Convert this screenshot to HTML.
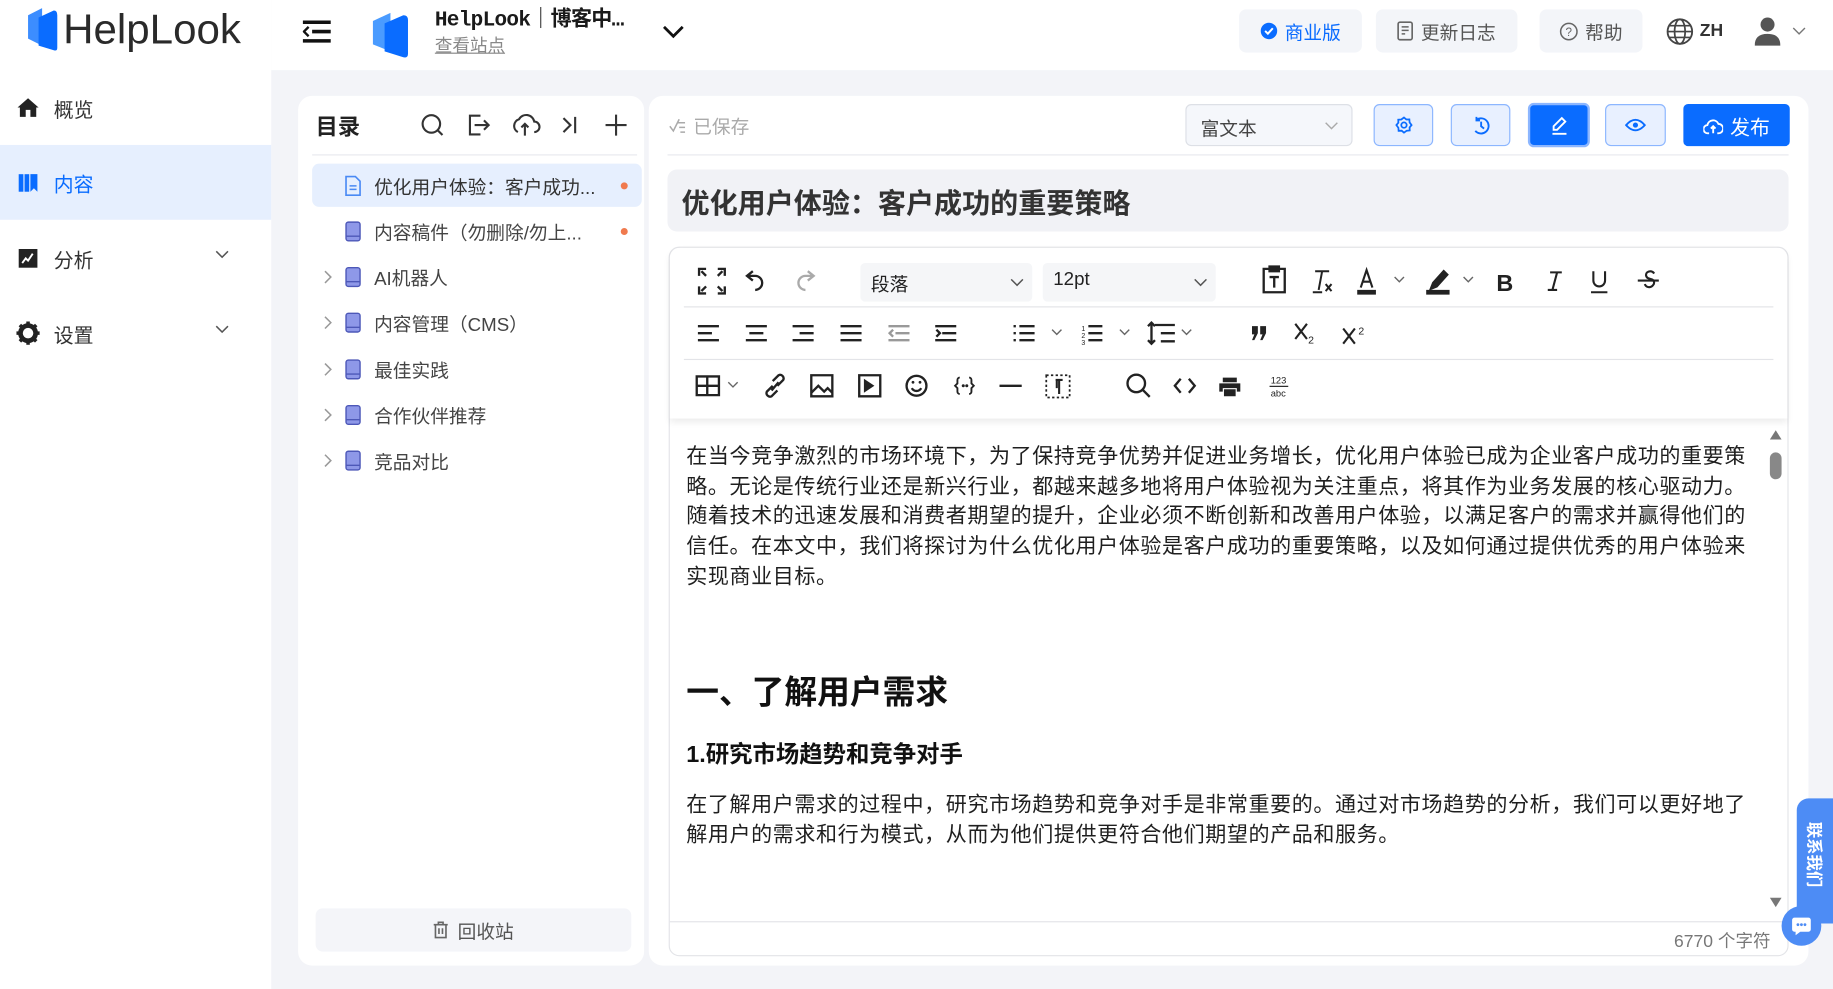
<!DOCTYPE html>
<html><head><meta charset="utf-8">
<style>
*{box-sizing:border-box;margin:0;padding:0}
html,body{width:1833px;height:989px;overflow:hidden;background:#f3f4f8}
body{font-family:"Liberation Sans","Noto Sans CJK SC",sans-serif;color:#222}
#w{position:absolute;left:0;top:0;width:1568px;height:846px;transform:scale(1.16901);transform-origin:0 0;background:#f3f4f8}
.a{position:absolute}
svg{display:block}
.side{left:0;top:0;width:232px;height:846px;background:#fff}
.nav{left:0;width:232px;height:64px;display:flex;align-items:center;padding-left:14px;font-size:17px;color:#333}
.nav .ic{width:20px;margin-right:12px}
.nav .ch{position:absolute;left:184px;top:25px}
.hdr{left:232px;top:0;width:1336px;height:60px;background:#fff}
.hb{top:8px;height:37px;background:#f3f5f9;border-radius:6px;display:flex;align-items:center;justify-content:center;font-size:16px;color:#555;gap:6px}
.card{background:#fff;border-radius:12px}
.ti{left:267px;width:282px;height:37px;display:flex;align-items:center;font-size:16px;color:#444}
.ti .ar{position:absolute;left:9px;top:13px}
.ti .bk{position:absolute;left:28px;top:10px}
.ti span{position:absolute;left:53px}
.dot{position:absolute;left:264px;top:16px;width:6px;height:6px;border-radius:50%;background:#f07a4e}
.tb{top:89px;height:36px;border:1px solid #8cb6ff;background:#e8f0ff;border-radius:5px;display:flex;align-items:center;justify-content:center}
.t div{font-size:18px;line-height:25.7px;height:25.7px;color:#1f1f1f;letter-spacing:0.5px;white-space:nowrap}
</style></head><body><div id="w">

<!-- sidebar -->
<div class="a side">
 <div class="a" style="left:20px;top:4px;display:flex;align-items:center">
  <svg width="30" height="40" viewBox="0 0 30 40"><path d="M4 8 L16 2 L16 34 L4 28Z" fill="#3c8dff"/><path d="M13 10 L26 4 Q29 4 29 8 L29 36 Q29 39 26 38 L13 34Z" fill="#0a6cff"/></svg>
  <span style="font-size:36px;color:#2a2a2a;margin-left:4px;letter-spacing:0px">HelpLook</span>
 </div>
 <div class="a nav" style="top:60px"><svg class="ic" width="20" height="18" viewBox="0 0 20 18"><path d="M10 1 L19 9 L17 9 L17 17 L12 17 L12 11 L8 11 L8 17 L3 17 L3 9 L1 9Z" fill="#222"/></svg>概览</div>
 <div class="a nav" style="top:124px;background:#e6effe;color:#0a6cff"><svg class="ic" width="20" height="18" viewBox="0 0 20 18"><rect x="2" y="2" width="4" height="15" fill="#0a6cff"/><rect x="7" y="2" width="4" height="15" fill="#0a6cff"/><path d="M12 2h6v15l-3-3-3 3z" fill="#0a6cff"/></svg>内容</div>
 <div class="a nav" style="top:189px"><svg class="ic" width="20" height="18" viewBox="0 0 20 18"><rect x="2" y="1" width="16" height="16" fill="#222"/><path d="M5 13 L8 9 L10 11 L14 5" stroke="#fff" stroke-width="1.6" fill="none"/></svg>分析<svg class="ch" width="12" height="8" viewBox="0 0 12 8"><path d="M1 1l5 5 5-5" stroke="#555" stroke-width="1.3" fill="none"/></svg></div>
 <div class="a nav" style="top:253px"><svg class="ic" width="20" height="20" viewBox="0 0 20 20"><circle cx="10" cy="10" r="6.5" fill="none" stroke="#222" stroke-width="4"/><path d="M10 0v4M10 16v4M0 10h4M16 10h4M3 3l3 3M14 14l3 3M3 17l3-3M14 6l3-3" stroke="#222" stroke-width="3"/></svg>设置<svg class="ch" width="12" height="8" viewBox="0 0 12 8"><path d="M1 1l5 5 5-5" stroke="#555" stroke-width="1.3" fill="none"/></svg></div>
</div>

<!-- header -->
<div class="a hdr"></div>
<svg class="a" style="left:259px;top:17px" width="24" height="20" viewBox="0 0 24 20"><path d="M0 2h24M8 10h16M0 18h24" stroke="#111" stroke-width="3"/><path d="M5 6 L1 10 L5 14" stroke="#111" stroke-width="2" fill="none"/></svg>
<svg class="a" style="left:316px;top:8px" width="34" height="42" viewBox="0 0 34 42"><path d="M3 10 L18 3 L18 36 L3 30Z" fill="#4a9bff"/><path d="M13 12 L29 5 Q33 5 33 9 L33 38 Q33 42 29 41 L13 36Z" fill="#0a6cff"/></svg>
<div class="a" style="left:372px;top:2px;font-size:18px;font-weight:bold;color:#1a1a1a;font-family:'Liberation Mono','Noto Sans CJK SC',monospace;letter-spacing:-0.6px">HelpLook｜博客中…</div>
<div class="a" style="left:372px;top:28px;font-size:15px;color:#888;text-decoration:underline">查看站点</div>
<svg class="a" style="left:566px;top:21px" width="20" height="13" viewBox="0 0 20 13"><path d="M2 2l8 8 8-8" stroke="#111" stroke-width="2.4" fill="none"/></svg>
<div class="a hb" style="left:1060px;width:105px;color:#0a6cff"><svg width="15" height="15" viewBox="0 0 16 16"><circle cx="8" cy="8" r="7.5" fill="#0a6cff"/><path d="M4.5 8l2.5 2.5 4.5-5" stroke="#fff" stroke-width="1.8" fill="none"/></svg>商业版</div>
<div class="a hb" style="left:1177px;width:121px"><svg width="14" height="17" viewBox="0 0 14 17"><rect x="1" y="1" width="12" height="15" rx="1.5" fill="none" stroke="#666" stroke-width="1.4"/><path d="M4 5h6M4 8h6M4 11h3" stroke="#666" stroke-width="1.3"/></svg>更新日志</div>
<div class="a hb" style="left:1317px;width:88px"><svg width="16" height="16" viewBox="0 0 16 16"><circle cx="8" cy="8" r="7" fill="none" stroke="#666" stroke-width="1.3"/><text x="8" y="12" font-size="10" text-anchor="middle" fill="#666" font-family="Liberation Sans">?</text></svg>帮助</div>
<svg class="a" style="left:1425px;top:15px" width="24" height="24" viewBox="0 0 24 24"><circle cx="12" cy="12" r="10.5" fill="none" stroke="#444" stroke-width="1.6"/><ellipse cx="12" cy="12" rx="4.5" ry="10.5" fill="none" stroke="#444" stroke-width="1.5"/><path d="M1.5 12h21M3 7h18M3 17h18" stroke="#444" stroke-width="1.4"/></svg>
<div class="a" style="left:1454px;top:18px;font-size:15px;font-weight:bold;color:#333">ZH</div>
<svg class="a" style="left:1501px;top:14px" width="22" height="26" viewBox="0 0 22 26"><circle cx="11" cy="7" r="6" fill="#555"/><path d="M0 25 Q0 15 11 15 Q22 15 22 25Z" fill="#555"/></svg>
<svg class="a" style="left:1533px;top:23px" width="12" height="8" viewBox="0 0 12 8"><path d="M1 1l5 5 5-5" stroke="#777" stroke-width="1.2" fill="none"/></svg>

<!-- tree panel -->
<div class="a card" style="left:255px;top:82px;width:296px;height:744px"></div>
<div class="a" style="left:270px;top:94px;font-size:19px;font-weight:bold;color:#222">目录</div>
<svg class="a" style="left:358px;top:96px" width="180" height="22" viewBox="0 0 180 22">
 <g stroke="#333" stroke-width="1.8" fill="none">
 <circle cx="11" cy="10" r="7.5"/><path d="M16.5 15.5l4 4"/>
 <path d="M53 3h-9v16h9M48 11h12M56 7l4 4-4 4"/>
 <path d="M85 17a6 6 0 0 1 1-11a7 7 0 0 1 13 2a4.5 4.5 0 0 1 0 9M91 20v-10M88 13l3-3 3 3"/>
 <path d="M124 5l6 6-6 6M134 4v14"/>
 <path d="M169 2v18M160 11h18"/></g></svg>
<div class="a" style="left:267px;top:132px;width:278px;height:1px;background:#e8e9ee"></div>
<div class="a ti" style="top:140px;background:#e6effe;border-radius:6px;color:#333"><svg class="bk" width="14" height="18" viewBox="0 0 14 18"><path d="M1 1h8l4 4v12H1z" fill="none" stroke="#4a8af4" stroke-width="1.4"/><path d="M4 9h6M4 12h6" stroke="#4a8af4" stroke-width="1.3"/></svg><span>优化用户体验：客户成功...</span><i class="dot"></i></div>
<div class="a ti" style="top:179px"><svg class="bk" width="14" height="18" viewBox="0 0 14 18"><rect x="1" y="1" width="12" height="16" rx="2" fill="#8e98e8" stroke="#4d58b8" stroke-width="1.2"/><path d="M1 13h12" stroke="#4d58b8" stroke-width="1.2"/></svg><span>内容稿件（勿删除/勿上...</span><i class="dot"></i></div>
<div class="a ti" style="top:218px"><svg class="ar" width="8" height="12" viewBox="0 0 8 12"><path d="M2 1l5 5-5 5" stroke="#999" stroke-width="1.3" fill="none"/></svg><svg class="bk" width="14" height="18" viewBox="0 0 14 18"><rect x="1" y="1" width="12" height="16" rx="2" fill="#8e98e8" stroke="#4d58b8" stroke-width="1.2"/><path d="M1 13h12" stroke="#4d58b8" stroke-width="1.2"/></svg><span>AI机器人</span></div>
<div class="a ti" style="top:257px"><svg class="ar" width="8" height="12" viewBox="0 0 8 12"><path d="M2 1l5 5-5 5" stroke="#999" stroke-width="1.3" fill="none"/></svg><svg class="bk" width="14" height="18" viewBox="0 0 14 18"><rect x="1" y="1" width="12" height="16" rx="2" fill="#8e98e8" stroke="#4d58b8" stroke-width="1.2"/><path d="M1 13h12" stroke="#4d58b8" stroke-width="1.2"/></svg><span>内容管理（CMS）</span></div>
<div class="a ti" style="top:297px"><svg class="ar" width="8" height="12" viewBox="0 0 8 12"><path d="M2 1l5 5-5 5" stroke="#999" stroke-width="1.3" fill="none"/></svg><svg class="bk" width="14" height="18" viewBox="0 0 14 18"><rect x="1" y="1" width="12" height="16" rx="2" fill="#8e98e8" stroke="#4d58b8" stroke-width="1.2"/><path d="M1 13h12" stroke="#4d58b8" stroke-width="1.2"/></svg><span>最佳实践</span></div>
<div class="a ti" style="top:336px"><svg class="ar" width="8" height="12" viewBox="0 0 8 12"><path d="M2 1l5 5-5 5" stroke="#999" stroke-width="1.3" fill="none"/></svg><svg class="bk" width="14" height="18" viewBox="0 0 14 18"><rect x="1" y="1" width="12" height="16" rx="2" fill="#8e98e8" stroke="#4d58b8" stroke-width="1.2"/><path d="M1 13h12" stroke="#4d58b8" stroke-width="1.2"/></svg><span>合作伙伴推荐</span></div>
<div class="a ti" style="top:375px"><svg class="ar" width="8" height="12" viewBox="0 0 8 12"><path d="M2 1l5 5-5 5" stroke="#999" stroke-width="1.3" fill="none"/></svg><svg class="bk" width="14" height="18" viewBox="0 0 14 18"><rect x="1" y="1" width="12" height="16" rx="2" fill="#8e98e8" stroke="#4d58b8" stroke-width="1.2"/><path d="M1 13h12" stroke="#4d58b8" stroke-width="1.2"/></svg><span>竞品对比</span></div>
<div class="a" style="left:270px;top:777px;width:270px;height:37px;background:#f4f5f9;border-radius:6px;display:flex;align-items:center;justify-content:center;gap:7px;font-size:16px;color:#555"><svg width="14" height="15" viewBox="0 0 14 15"><path d="M1 3h12M5 3V1h4v2M2.5 3v11h9V3M5.5 6v5M8.5 6v5" stroke="#666" stroke-width="1.4" fill="none"/></svg>回收站</div>

<!-- editor panel -->
<div class="a card" style="left:555px;top:82px;width:992px;height:744px;border-radius:12px"></div>
<div class="a" style="left:572px;top:95px;font-size:16px;color:#aaa;display:flex;align-items:center;gap:6px"><svg width="15" height="14" viewBox="0 0 15 14"><path d="M1 8l3 4 5-10M8 5h6M9 9h5M10 13h4" stroke="#aaa" stroke-width="1.3" fill="none"/></svg>已保存</div>
<div class="a" style="left:1014px;top:89px;width:143px;height:36px;border:1px solid #dde0e6;background:#f5f7fb;border-radius:5px;font-size:16px;color:#444;padding:7px 0 0 12px">富文本<svg style="position:absolute;left:118px;top:14px" width="12" height="8" viewBox="0 0 12 8"><path d="M1 1l5 5 5-5" stroke="#aaa" stroke-width="1.2" fill="none"/></svg></div>
<div class="a tb" style="left:1175px;width:51px"><svg width="16" height="16" viewBox="0 0 16 16"><circle cx="8" cy="8" r="2.3" fill="none" stroke="#0a6cff" stroke-width="1.5"/><path d="M8 1.5l2 1.7 2.6-.1.2 2.6L14.5 8l-1.7 2 .1 2.6-2.6.2L8 14.5l-2-1.7-2.6.1-.2-2.6L1.5 8l1.7-2-.1-2.6 2.6-.2z" fill="none" stroke="#0a6cff" stroke-width="1.5"/></svg></div>
<div class="a tb" style="left:1241px;width:51px"><svg width="16" height="17" viewBox="0 0 16 17"><path d="M4 3.5A6.5 6.5 0 1 1 3 13M4 1v3h3M8 5v4l2.5 2" stroke="#0a6cff" stroke-width="1.6" fill="none"/></svg></div>
<div class="a tb" style="left:1307px;top:88px;width:53px;height:38px;background:#0a6cff;border:2px solid #8cb6ff"><svg width="16" height="17" viewBox="0 0 16 17"><path d="M10 2l3 3-7 7H3V9z M2 15.5h12" stroke="#fff" stroke-width="1.6" fill="none"/></svg></div>
<div class="a tb" style="left:1373px;width:52px"><svg width="18" height="12" viewBox="0 0 18 12"><path d="M1 6Q9-3 17 6Q9 15 1 6Z" fill="none" stroke="#0a6cff" stroke-width="1.6"/><circle cx="9" cy="6" r="2.2" fill="#0a6cff"/></svg></div>
<div class="a" style="left:1440px;top:89px;width:91px;height:36px;background:#0a6cff;border-radius:4px;display:flex;align-items:center;justify-content:center;gap:6px;color:#fff;font-size:17px"><svg width="17" height="15" viewBox="0 0 17 15"><path d="M5 14H4a3.5 3.5 0 0 1-.5-7A5 5 0 0 1 13 6a3.5 3.5 0 0 1 0 8h-1M8.5 14V8M6.5 10l2-2 2 2" stroke="#fff" stroke-width="1.6" fill="none"/></svg>发布</div>
<div class="a" style="left:571px;top:132px;width:959px;height:1px;background:#e8e9ee"></div>
<div class="a" style="left:571px;top:145px;width:959px;height:53px;background:#f1f2f6;border-radius:8px;font-size:24px;font-weight:bold;color:#333;padding:9px 0 0 12px">优化用户体验：客户成功的重要策略</div>

<!-- editor box -->
<div class="a" style="left:572px;top:211px;width:958px;height:607px;border:1px solid #e3e4e8;border-radius:9px;background:#fff"></div>
<div class="a" style="left:573px;top:212px;width:956px;height:146px;border-radius:9px 9px 0 0;box-shadow:0 3px 6px rgba(0,0,0,0.07);background:#fff"></div>
<div class="a" style="left:585px;top:262px;width:932px;height:1px;background:#e3e4e8"></div>
<div class="a" style="left:585px;top:307px;width:932px;height:1px;background:#e3e4e8"></div>
<div class="a" style="left:736px;top:225px;width:147px;height:33px;background:#f5f6f8;border-radius:4px;font-size:16px;color:#222;padding:5px 0 0 9px">段落<svg style="position:absolute;left:128px;top:13px" width="12" height="8" viewBox="0 0 12 8"><path d="M1 1l5 5 5-5" stroke="#555" stroke-width="1.3" fill="none"/></svg></div>
<div class="a" style="left:892px;top:225px;width:148px;height:33px;background:#f5f6f8;border-radius:4px;font-size:16px;color:#222;padding:6px 0 0 9px">12pt<svg style="position:absolute;left:129px;top:13px" width="12" height="8" viewBox="0 0 12 8"><path d="M1 1l5 5 5-5" stroke="#555" stroke-width="1.3" fill="none"/></svg></div>

<svg class="a" style="left:585px;top:220px" width="940" height="130" viewBox="585 220 940 130">
<g stroke="#222" stroke-width="2" fill="none">
 <path d="M598 236v-6h6M614 230h6v6M598 245v6h6M620 245v6h-6M600 232l4 4M618 232l-4 4M600 249l4-4M618 249l-4-4"/>
 <path d="M644 232l-5 4 5 4M639 236h7a6 6 0 0 1 0 12"/>
 <path d="M691 232l5 4-5 4M696 236h-7a6 6 0 0 0 0 12" stroke="#aaa"/>
 <path d="M1081 230h18v20h-18zM1086 228h8v4h-8zM1086 237h8M1090 237v9"/>
 <path d="M1125 232h12M1131 232l-3 16M1123 250h8M1134 243l5 6M1139 243l-5 6" stroke-width="1.7"/>
 <path d="M1164 246l5-15 5 15M1166 241h6" stroke-width="1.8"/>
 <path d="M1193 237l4 4 4-4M1252 237l4 4 4-4" stroke-width="1.2" stroke="#666"/>
 <path d="M1235 232l-9 10-2 5 5-2 9-10z" fill="#222"/>
 <path d="M1332 233l-4 15M1326 233h10M1324 248h8" stroke-width="1.8"/>
 <path d="M1363 232v8a5 5 0 0 0 10 0v-8M1361 250h14" stroke-width="1.8"/>
 <path d="M1415 234a4 4 0 0 0-6-1 3 3 0 0 0 1 5l3 1a3 3 0 0 1 1 5 4 4 0 0 1-7-1M1401 240h18" stroke-width="1.8"/>
 <path d="M597 279h18M597 285h12M597 291h18M638 279h18M641 285h12M638 291h18M678 279h18M684 285h12M678 291h18M719 279h18M719 285h18M719 291h18"/>
 <path d="M760 279h18M766 285h12M760 291h18M764 282l-3 3 3 3" stroke="#999"/>
 <path d="M800 279h18M806 285h12M800 291h18M801 282l3 3-3 3"/>
 <path d="M872 279h13M872 285h13M872 291h13M867 279h2M867 285h2M867 291h2"/>
 <path d="M931 279h12M931 285h12M931 291h12"/>
 <path d="M988 278h17M993 285h12M993 292h12M985 276v18M982 279l3-3 3 3M982 291l3 3 3-3"/>
 <path d="M900 282l4 4 4-4M958 282l4 4 4-4M1011 282l4 4 4-4" stroke-width="1.2" stroke="#666"/>
 <path d="M1108 277l10 13M1118 277l-10 13M1149 281l10 13M1159 281l-10 13" stroke-width="1.8"/>
 <path d="M596 322h19v16h-19zM596 330h19M605 322v16"/>
 <path d="M623 327l4 4 4-4" stroke-width="1.2" stroke="#666"/>
 <path d="M661 330l-5 5a3 3 0 0 0 4 4l5-5M665 330l5-5a3 3 0 0 0-4-4l-5 5M660 334l6-7"/>
 <path d="M694 321h18v18h-18zM694 336l6-6 5 5 3-3 4 4"/>
 <path d="M735 321h18v18h-18z"/>
 <circle cx="784" cy="330" r="8.5"/>
 <path d="M780 332a4.5 4.5 0 0 0 8 0"/>
 <path d="M821 323a2 2 0 0 0-2 2v3l-2 2 2 2v3a2 2 0 0 0 2 2M829 323a2 2 0 0 1 2 2v3l2 2-2 2v3a2 2 0 0 1-2 2" stroke-width="1.6"/>
 <path d="M855 330h19"/>
 <path d="M895 321h20v19h-20z" stroke-dasharray="2 2" stroke-width="1.5"/>
 <path d="M903 325h6M906 325v12M904 325v7" stroke-width="1.8"/>
 <circle cx="972" cy="328" r="7.5"/><path d="M977.5 333.5l6 6"/>
 <path d="M1010 324l-5 6 5 6M1017 324l5 6-5 6"/>
</g>
<g fill="#222">
 <path d="M1161 248h16v4h-16zM1220 248h20v4h-20z"/>
 <text x="1280" y="249" font-size="20" font-weight="bold" font-family="Liberation Sans">B</text>
 <path d="M739 324l9 6-9 6z"/>
 <circle cx="781" cy="327" r="1.2"/><circle cx="787" cy="327" r="1.2"/>
 <circle cx="824" cy="330" r="1.3"/><circle cx="827" cy="330" r="1.3"/>
 <path d="M1071 279h5v6l-3 6h-2l2-5h-2zM1078 279h5v6l-3 6h-2l2-5h-2z"/>
 <text x="1119" y="294" font-size="9" font-family="Liberation Sans">2</text>
 <text x="1162" y="286" font-size="9" font-family="Liberation Sans">2</text>
 <path d="M1046 323h12v4h-12zM1043 328h18v7h-3v-3h-12v3h-3zM1047 333h10v6h-10z"/>
 <text x="1087" y="328" font-size="8" font-family="Liberation Sans">123</text>
 <rect x="1086" y="330" width="16" height="1"/>
 <text x="1087" y="339" font-size="8" font-family="Liberation Sans">abc</text>
 <text x="925" y="283" font-size="6" font-family="Liberation Sans">1</text>
 <text x="925" y="289" font-size="6" font-family="Liberation Sans">2</text>
 <text x="925" y="295" font-size="6" font-family="Liberation Sans">3</text>
</g>
</svg>

<!-- content -->
<div class="a t" style="left:587px;top:378px">
<div>在当今竞争激烈的市场环境下，为了保持竞争优势并促进业务增长，优化用户体验已成为企业客户成功的重要策</div>
<div>略。无论是传统行业还是新兴行业，都越来越多地将用户体验视为关注重点，将其作为业务发展的核心驱动力。</div>
<div>随着技术的迅速发展和消费者期望的提升，企业必须不断创新和改善用户体验，以满足客户的需求并赢得他们的</div>
<div>信任。在本文中，我们将探讨为什么优化用户体验是客户成功的重要策略，以及如何通过提供优秀的用户体验来</div>
<div>实现商业目标。</div>
</div>
<div class="a" style="left:587px;top:571px;font-size:28px;font-weight:bold;color:#111">一、了解用户需求</div>
<div class="a" style="left:587px;top:629px;font-size:20px;font-weight:bold;color:#111">1.研究市场趋势和竞争对手</div>
<div class="a t" style="left:587px;top:676px">
<div>在了解用户需求的过程中，研究市场趋势和竞争对手是非常重要的。通过对市场趋势的分析，我们可以更好地了</div>
<div>解用户的需求和行为模式，从而为他们提供更符合他们期望的产品和服务。</div>
</div>

<!-- scrollbar -->
<svg class="a" style="left:1513px;top:367px" width="12" height="10" viewBox="0 0 12 10"><path d="M1 9L6 1l5 8z" fill="#777"/></svg>
<div class="a" style="left:1514px;top:387px;width:10px;height:23px;background:#888;border-radius:5px"></div>
<svg class="a" style="left:1513px;top:767px" width="12" height="10" viewBox="0 0 12 10"><path d="M1 1h10L6 9z" fill="#777"/></svg>
<div class="a" style="left:573px;top:788px;width:956px;height:1px;background:#e3e4e8"></div>
<div class="a" style="left:1432px;top:794px;font-size:15px;color:#777">6770 个字符</div>

<!-- contact tab -->
<div class="a" style="left:1537px;top:683px;width:40px;height:107px;background:#4d8cf5;border-radius:10px 0 0 0"></div>
<div class="a" style="left:1542px;top:703px;font-size:14px;font-weight:bold;color:#fff;writing-mode:vertical-rl;text-orientation:sideways;letter-spacing:0;line-height:20px">联系我们</div>
<div class="a" style="left:1524px;top:775px;width:34px;height:34px;border-radius:50%;background:#4d8cf5"></div>
<svg class="a" style="left:1532px;top:783px" width="18" height="18" viewBox="0 0 18 18"><path d="M3 2h12a2 2 0 0 1 2 2v8a2 2 0 0 1-2 2H8l-4 3v-3H3a2 2 0 0 1-2-2V4a2 2 0 0 1 2-2z" fill="#fff"/><circle cx="6" cy="8" r="1.2" fill="#4d8cf5"/><circle cx="9" cy="8" r="1.2" fill="#4d8cf5"/><circle cx="12" cy="8" r="1.2" fill="#4d8cf5"/></svg>

</div></body></html>
